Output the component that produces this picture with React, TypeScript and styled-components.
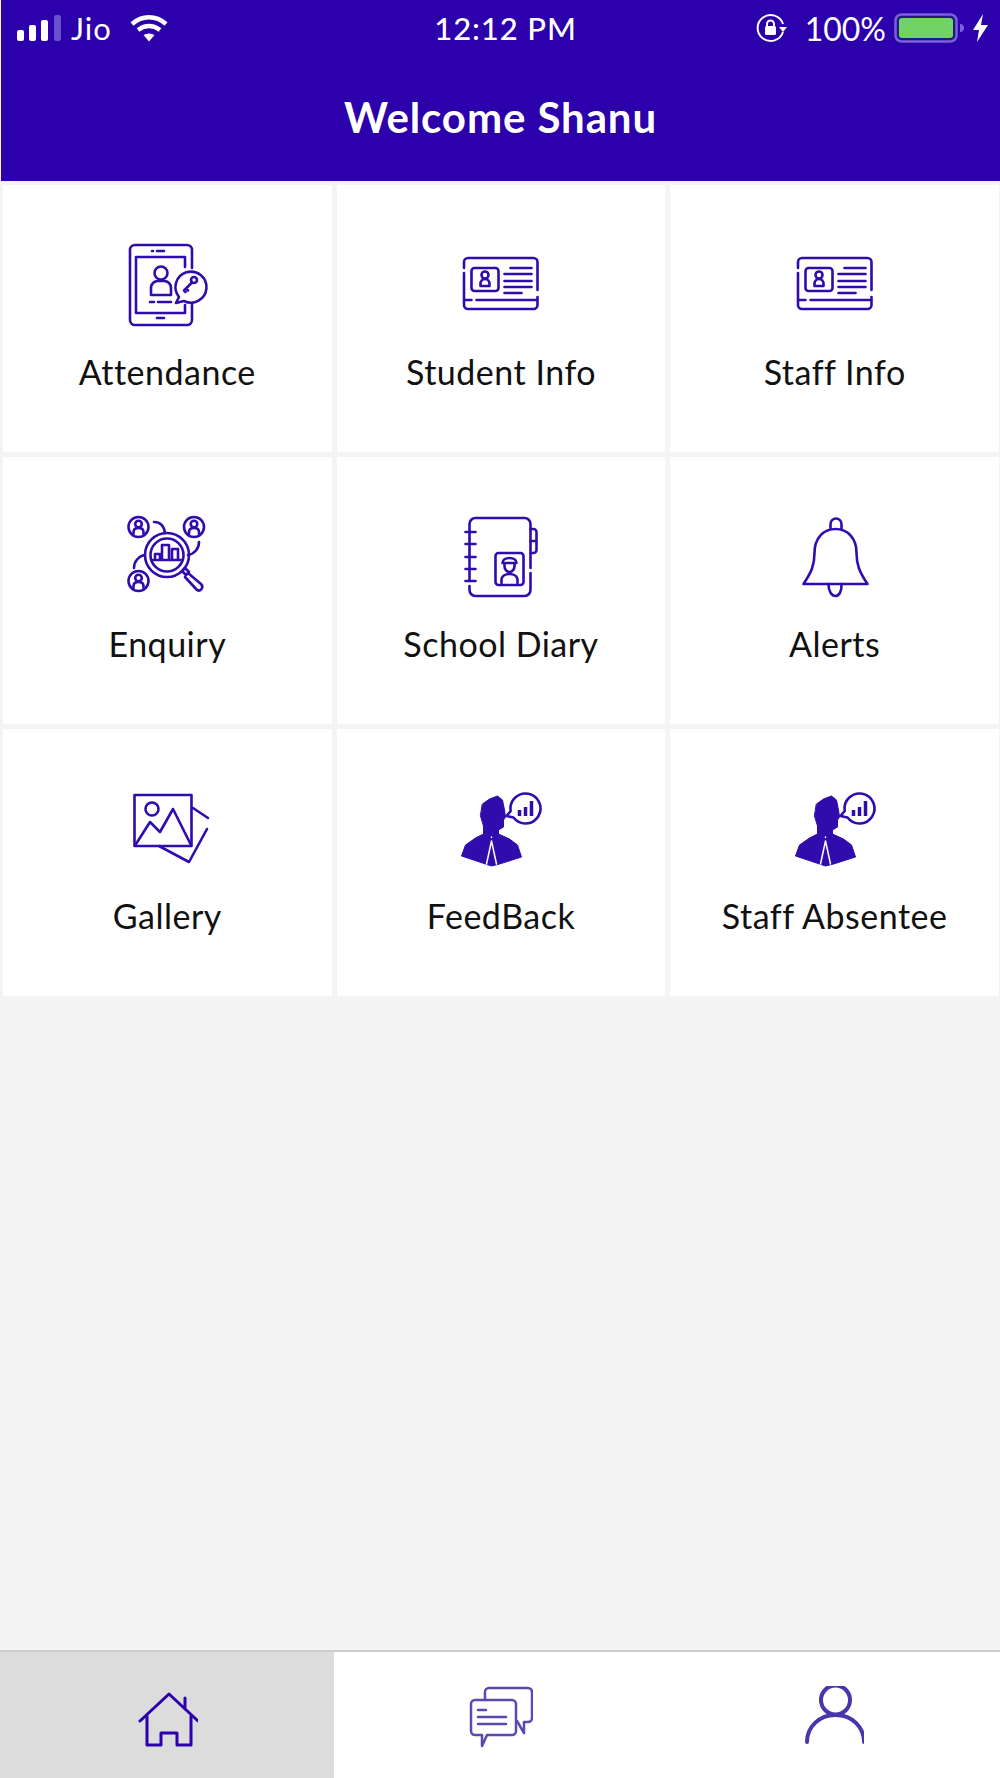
import { FC, ReactNode } from "react";
import styled, { createGlobalStyle } from "styled-components";

const PURPLE = "#2c00aa";

const GlobalStyle = createGlobalStyle`
  html, body {
    margin: 0;
    padding: 0;
    background: #f4f4f4;
  }
  * {
    box-sizing: border-box;
  }
`;

const Page = styled.div`
  width: 1000px;
  height: 1778px;
  display: flex;
  flex-direction: column;
  background: #f4f4f4;
  font-family: Lato, "Noto Sans", sans-serif;
  overflow: hidden;
`;

const Header = styled.header`
  height: 181px;
  flex: none;
  background: ${PURPLE};
  color: #fff;
  border-left: 1px solid #f4f4f4;
`;

const StatusBar = styled.div`
  display: grid;
  grid-template-columns: 1fr auto 1fr;
  align-items: center;
  height: 56px;
  padding: 0 12px 0 16px;
`;

const StatusSide = styled.div<{ $end?: boolean }>`
  display: flex;
  align-items: center;
  justify-content: ${(p) => (p.$end ? "flex-end" : "flex-start")};
`;

const Carrier = styled.span`
  font-size: 31px;
  letter-spacing: 1px;
  margin: 0 18px 0 9px;
`;

const Clock = styled.span`
  font-size: 31px;
  font-weight: 500;
  letter-spacing: 0.9px;
  margin-left: 6px;
`;

const Percent = styled.span`
  font-size: 32px;
  margin: 0 8px 0 17px;
`;

const Title = styled.h1`
  margin: 0;
  padding-top: 36px;
  text-align: center;
  font-size: 42px;
  line-height: 50px;
  font-weight: 700;
  letter-spacing: 0.9px;
`;

const Menu = styled.main`
  flex: 1;
  display: grid;
  grid-template-columns: repeat(3, 1fr);
  grid-auto-rows: 267px;
  gap: 5px;
  padding: 4px 1px 0 3px;
`;

const Tile = styled.div`
  display: flex;
  flex-direction: column;
  align-items: center;
  padding-top: 50px;
  background: #fff;
`;

const TileIcon = styled.svg`
  display: block;
  width: 110px;
  height: 100px;
  fill: none;
  stroke: #2f0cab;
  stroke-width: 2.6;
  stroke-linecap: round;
  stroke-linejoin: round;
`;

const Label = styled.div`
  margin-top: 17px;
  font-size: 34px;
  line-height: 40px;
  letter-spacing: 0.5px;
  color: #111;
`;

const TabBar = styled.nav`
  flex: none;
  height: 128px;
  display: grid;
  grid-template-columns: 334px 1fr 334px;
  border-top: 2px solid #cdcdcd;
  background: #fff;
`;

const Tab = styled.div<{ $active?: boolean }>`
  display: flex;
  justify-content: center;
  padding-top: 34px;
  background: ${(p) => (p.$active ? "#dcdcdc" : "#fff")};
`;

const TabIcon = styled.svg`
  display: block;
  fill: none;
  stroke-linecap: round;
  stroke-linejoin: round;
`;

const Attendance = () => (
  <TileIcon viewBox="12 5 110 100">
    <path d="M92 38V20a5 5 0 0 0-5-5H35a5 5 0 0 0-5 5v70a5 5 0 0 0 5 5h52a5 5 0 0 0 5-5V73" />
    <path d="M85 37V27H36v56h49v-8" />
    <path d="M52 21h1M57 21h7M57 88h7M50 72h4M58 72h13" />
    <circle cx="61" cy="43" r="6.5" />
    <path d="M51 65v-7c0-4 3-7 7-7h6c4 0 7 3 7 7v7z" />
    <path d="M79 67l-3 6 8-2a15.500 15.500 0 1 0-5-4z" />
    <circle cx="94" cy="50" r="3" />
    <path d="M92 52.500l-8 8M86 58.500l2 2M84 60.500l1.500 1.500" />
  </TileIcon>
);

const InfoCard = () => (
  <TileIcon viewBox="6.500 -5 110 100">
    <path d="M24.500 28v-6a4 4 0 0 1 4-4H94a4 4 0 0 1 4 4v28M24.500 33v32a4 4 0 0 0 4 4H94a4 4 0 0 0 4-4v-8" />
    <path d="M25 60h7M37 60h60" />
    <rect x="32" y="28" width="27" height="23" rx="3" />
    <circle cx="45.500" cy="35" r="3.500" />
    <path d="M41 46v-2c0-3 2-5 4.500-5s4.500 2 4.500 5v2z" />
    <path d="M71 28h21M65 34h27M65 41h27M65 47h27M65 53h17" />
  </TileIcon>
);

const Head = ({ x, y }: { x: number; y: number }) => (
  <>
    <circle cx={x} cy={y} r="10" />
    <circle cx={x} cy={y - 3} r="3.300" />
    <path d={`M${x - 5} ${y + 7}v-2c0-3 2-4 5-4s5 1 5 4v2`} />
  </>
);

const Enquiry = () => (
  <TileIcon viewBox="2 2 110 100">
    <Head x={28.5} y={22} />
    <Head x={84} y={22} />
    <Head x={28.5} y={76} />
    <circle cx="57" cy="50" r="22" />
    <circle cx="57" cy="50" r="16.500" />
    <path d="M44 17c6 0 10 4 11 11M89 37c0 7-5 12-11 13M24 63c0-7 5-12 11-13" />
    <path d="M72 66l3-3 4 4-3 3zM78 68l13 11c3 3 0 8-4 6L75 72" />
    <path d="M43 55h28M45 55v-6h5v6M52 55V40h7v15M62 55V44h6v11" />
  </TileIcon>
);

const Diary = () => (
  <TileIcon viewBox="-3.500 2 110 100">
    <path d="M20 76V19a6 6 0 0 1 6-6h49a6 6 0 0 1 6 6v44M81 68v17a6 6 0 0 1-6 6H26a6 6 0 0 1-6-6v-4" />
    <path d="M16 27h10M16 39h10M16 52h10M16 64h10M16 76h10" />
    <path d="M81 24h3a3 3 0 0 1 3 3v18a3 3 0 0 1-3 3h-3M81 36h6" />
    <rect x="46" y="48" width="28" height="32" rx="3" />
    <path d="M53 58c0-3 3-5 7-5s7 2 7 5zM55 58v3c0 3 2 6 5 6s5-3 5-6v-3M52 78v-3c0-4 4-6 8-6s8 2 8 6v3" />
  </TileIcon>
);

const Bell = () => (
  <TileIcon viewBox="-0.500 2 110 100">
    <path d="M23 79h64C79 67 76 60 76 48c0-15-9-24-21-24s-21 9-21 24c0 12-3 19-11 31z" />
    <path d="M50 24v-5a5.500 5.500 0 0 1 11 0v5M48 79c0 16 14 16 13 0" />
  </TileIcon>
);

const Gallery = () => (
  <TileIcon viewBox="2 -1 110 100">
    <rect x="24.500" y="15" width="57" height="51" />
    <circle cx="42" cy="29" r="6.500" />
    <path d="M26 64l14-22 10 10 13-23 18 36" />
    <path d="M83 28l15 10M97 49L79 82 49 66" />
  </TileIcon>
);

const Feedback = () => (
  <TileIcon viewBox="-3.500 -1 110 100">
    <path
      d="M33 24L40 19 48 16 53 20 55 30 56 37 54 40 54 47 49 50 49 54 60 59 68 65 72 77 50 84 42 86 36 84 12 76 16 65 26 58 34 54 34 46 31 36Z"
      fill="#2f0cab"
      strokeWidth="1"
    />
    <path d="M42 61L37 84M42 61L47 84M42 57v.5" stroke="#fff" strokeWidth="1.500" />
    <path d="M61.200 31L57 36 64 37.500A15 15 0 1 0 61.200 31z" />
    <path d="M70 36v-6M76 36V27M82 36V21" strokeWidth="3.500" strokeLinecap="butt" />
  </TileIcon>
);

const items: { label: string; icon: ReactNode }[] = [
  { label: "Attendance", icon: <Attendance /> },
  { label: "Student Info", icon: <InfoCard /> },
  { label: "Staff Info", icon: <InfoCard /> },
  { label: "Enquiry", icon: <Enquiry /> },
  { label: "School Diary", icon: <Diary /> },
  { label: "Alerts", icon: <Bell /> },
  { label: "Gallery", icon: <Gallery /> },
  { label: "FeedBack", icon: <Feedback /> },
  { label: "Staff Absentee", icon: <Feedback /> },
];

const Signal = () => (
  <svg width="45" height="28" viewBox="0 0 45 28">
    <rect x="0" y="16" width="7" height="11" rx="2" fill="#fff" />
    <rect x="12" y="11" width="7" height="16" rx="2" fill="#fff" />
    <rect x="24" y="6" width="7" height="21" rx="2" fill="#fff" />
    <rect x="37" y="1" width="7" height="26" rx="2" fill="#6a4fd0" />
  </svg>
);

const Wifi = () => (
  <svg width="38" height="28" viewBox="0 0 38 28" fill="none" stroke="#fff" strokeWidth="4.500">
    <path d="M2 10c10-9 24-9 34 0M8 16c7-5 15-5 22 0" />
    <path d="M13.500 21c3.500-2 7.500-2 11 0L19 27.500z" fill="#fff" stroke="none" />
  </svg>
);

const RotationLock = () => (
  <svg width="32" height="30" viewBox="0 0 32 30" fill="none" stroke="#fff" strokeWidth="2">
    <path d="M27 19a13 13 0 1 1 0-8" />
    <path d="M23 14h8l-4 5z" fill="#fff" stroke="none" />
    <rect x="9" y="13" width="11" height="9" rx="1.500" fill="#fff" stroke="none" />
    <path d="M11 14v-3a3.500 3.500 0 0 1 7 0v3" />
  </svg>
);

const BatterySvg = styled.svg`
  display: block;
  margin-right: 7px;
`;

const Battery = () => (
  <BatterySvg width="72" height="32" viewBox="0 0 72 32">
    <rect x="1.500" y="2.500" width="61" height="27" rx="6" fill="#1f1a80" stroke="#7a5fe0" strokeWidth="2.500" />
    <rect x="5" y="6" width="54" height="20" rx="3" fill="#6fd464" />
    <path d="M66 12c3 0 4 2 4 4s-1 4-4 4z" fill="#7a5fe0" />
  </BatterySvg>
);

const Bolt = () => (
  <svg width="15" height="28" viewBox="0 0 15 28" fill="#fff">
    <path d="M10 0L0 16h6L4 28l11-17H8z" />
  </svg>
);

const HomeIcon = () => (
  <TabIcon width="62" height="64" viewBox="136 1686 62 64" stroke="#2c00aa" strokeWidth="3">
    <path d="M140 1721l29-27 29 27M185 1698v11" />
    <path d="M147 1716v29h14v-12h16v12h14v-29" />
  </TabIcon>
);

const ChatIcon = () => (
  <TabIcon width="66" height="62" viewBox="468 1686 66 62" stroke="#5b49ae" strokeWidth="2.500">
    <path d="M486 1700v-8a4 4 0 0 1 4-4h39a4 4 0 0 1 4 4v26a4 4 0 0 1-4 4h-4v11l-7-12" />
    <path d="M476 1700h37a4 4 0 0 1 4 4v27a4 4 0 0 1-4 4h-25l-5 11v-11h-7a4 4 0 0 1-4-4v-27a4 4 0 0 1 4-4z" />
    <path d="M479 1710h8M479 1717h28M479 1724h28" />
  </TabIcon>
);

const UserIcon = () => (
  <TabIcon width="62" height="62" viewBox="802 1686 62 62" stroke="#4a35ad" strokeWidth="4">
    <ellipse cx="835.500" cy="1700" rx="14.500" ry="14.500" />
    <path d="M807 1742c0-15 12-27 28.500-27s28.500 12 28.500 27" />
  </TabIcon>
);

const App: FC = () => {
  return (
    <Page>
      <GlobalStyle />
      <Header>
        <StatusBar>
          <StatusSide>
            <Signal />
            <Carrier>Jio</Carrier>
            <Wifi />
          </StatusSide>
          <Clock>12:12 PM</Clock>
          <StatusSide $end>
            <RotationLock />
            <Percent>100%</Percent>
            <Battery />
            <Bolt />
          </StatusSide>
        </StatusBar>
        <Title>Welcome Shanu</Title>
      </Header>
      <Menu>
        {items.map((item) => (
          <Tile key={item.label}>
            {item.icon}
            <Label>{item.label}</Label>
          </Tile>
        ))}
      </Menu>
      <TabBar>
        <Tab $active>
          <HomeIcon />
        </Tab>
        <Tab>
          <ChatIcon />
        </Tab>
        <Tab>
          <UserIcon />
        </Tab>
      </TabBar>
    </Page>
  );
};

export default App;
